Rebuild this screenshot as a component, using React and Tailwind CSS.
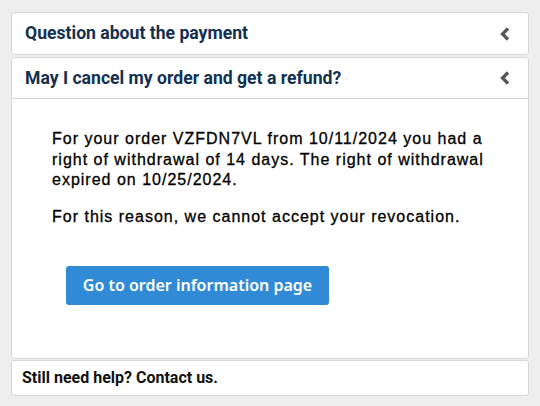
import React from "react";

function Chevron() {
  return (
    <svg width="12" height="14" viewBox="0 0 12 14" className="shrink-0">
      <polyline points="9,1.5 3.5,7 9,12.5" fill="none" stroke="#555" strokeWidth="3.2" strokeLinecap="butt" strokeLinejoin="miter" />
    </svg>
  );
}

export default function App() {
  return (
    <div className="w-[540px] h-[406px] bg-[#eeeeee] pt-[12px] px-[11px]" style={{ fontFamily: "Roboto, sans-serif" }}>
      <div className="bg-white border border-[#d6d6d6] rounded-[3px] h-[43px] flex items-center justify-between pl-[13px] pr-[17px]">
        <span className="text-[17.6px] font-bold text-[#14304f]">Question about the payment</span>
        <Chevron />
      </div>
      <div className="mt-[2px] bg-white border border-[#d6d6d6] rounded-[3px] h-[302px] flex flex-col">
        <div className="h-[41px] flex items-center justify-between pl-[13px] pr-[17px] border-b border-[#d6d6d6] shrink-0">
          <span className="text-[17.6px] font-bold text-[#14304f]">May I cancel my order and get a refund?</span>
          <Chevron />
        </div>
        <div className="pl-[40px] pr-[20px] pt-[30px] text-[16px] tracking-[1px] leading-[20.5px] text-black [-webkit-text-stroke:0.3px_black]" style={{ fontFamily: "'Liberation Sans', Arial, sans-serif" }}>
          <p>For your order VZFDN7VL from 10/11/2024 you had a right of withdrawal of 14 days. The right of withdrawal expired on 10/25/2024.</p>
          <p className="mt-[16px]">For this reason, we cannot accept your revocation.</p>
          <button className="mt-[39px] ml-[14px] h-[39px] w-[263px] bg-[#318ad6] rounded-[3px] text-white text-[16px] tracking-normal font-semibold [-webkit-text-stroke:0px]" style={{ fontFamily: "'Noto Sans', sans-serif" }}>
            Go to order information page
          </button>
        </div>
      </div>
      <div className="mt-[1px] bg-white border border-[#d6d6d6] rounded-[3px] h-[36px] flex items-center pl-[10px]">
        <span className="text-[16px] font-bold text-[#111]">Still need help? Contact us.</span>
      </div>
    </div>
  );
}
